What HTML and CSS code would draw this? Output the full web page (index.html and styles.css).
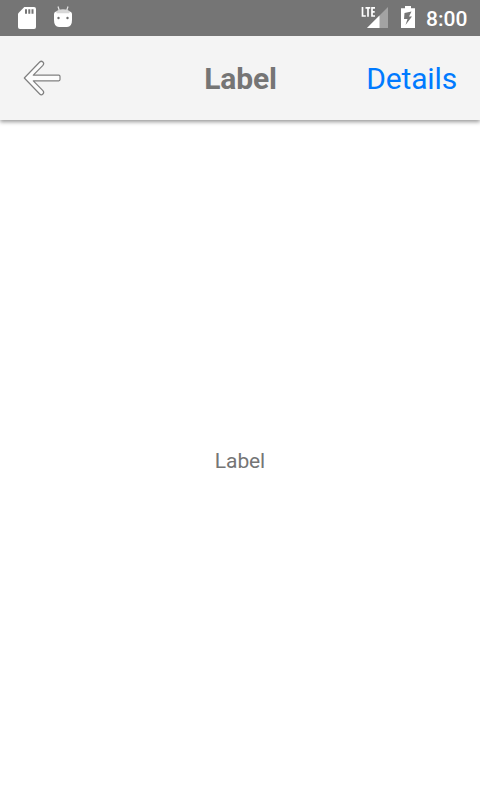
FILE: index.html
```html
<!DOCTYPE html>
<html lang="en">
<head>
<meta charset="utf-8">
<title>Label</title>
<link rel="stylesheet" href="styles.css">
</head>
<body>
<div class="status-bar">
  <svg class="sd" width="18" height="22" viewBox="0 0 18 22"><path fill="#fff" d="M6.300 0H16a2 2 0 0 1 2 2v18a2 2 0 0 1-2 2H2a2 2 0 0 1-2-2V6.500z"/><path fill="#757575" d="M7 2.200h2v4.500H7zM10.300 2.200h2v4.500h-2zM13.500 2.200h2v4.500h-2z"/></svg>
  <svg class="droid" width="18" height="22" viewBox="0 0 18 22"><path d="M4 .5l1.300 4M14 .5l-1.300 4" stroke="#e5e5e5" stroke-width="1.200"/><path fill="#fff" d="M0 8q0-2 2-2.500h14q2 .5 2 2.500v6q0 7-5 7H5q-5 0-5-7z"/><path fill="#d8d8d8" d="M2 6q1.500-2.700 7-2.700T16 6l-1 1.300H3z"/><circle cx="4.500" cy="12" r="1.200" fill="#707070"/><circle cx="13.500" cy="12" r="1.200" fill="#707070"/></svg>
  <div class="spacer"></div>
  <svg class="signal" width="28" height="24" viewBox="0 0 28 24"><path fill="#a3a3a3" d="M27 3v21H6z"/><path fill="#fff" d="M18.500 11.500V24H6z"/><path fill="#757575" d="M0 0h15.500v13.500H0z"/><path fill="none" stroke="#fff" stroke-width="1.700" d="M1.500 3v9H4.800M4.500 3.800h4.800M7 3.800v9M14 3.800h-3v8.200h3M11 7.800h2.700"/></svg>
  <svg class="battery" width="14" height="22" viewBox="0 0 14 22"><path fill="#fff" d="M4 0h6v2.300h4V22H0V2.300h4z"/><path fill="#757575" d="M10.500 5.500L3.500 7 3 13h3.500L4.500 19 11 10.500H8z"/></svg>
  <span class="clock">8:00</span>
</div>
<header class="nav-bar">
  <svg class="back" width="40" height="38" viewBox="0 0 40 38"><path fill="#fcfcfc" stroke="#808080" stroke-width="1.200" stroke-linejoin="round" d="M1.300 19L16.700 3q1.600-1.500 3.200 0t0 3.400L10.300 16.200H35.800q1.200 0 1.200 1.200v3.200q0 1.200-1.200 1.200H10.300L19.900 31.600q1.600 1.800 0 3.400t-3.200 0z"/></svg>
  <h1 class="title">Label</h1>
  <a class="details">Details</a>
</header>
<main class="content">Label</main>
</body>
</html>
```
FILE: styles.css
```css
* { box-sizing: border-box; }
body {
  margin: 0;
  height: 800px;
  display: flex;
  flex-direction: column;
  overflow: hidden;
  background: #fff;
  font-family: Roboto, sans-serif;
  color: #757575;
}
svg { display: block; flex: none; }
.status-bar {
  position: relative;
  z-index: 1;
  height: 36px;
  flex: none;
  display: flex;
  align-items: flex-start;
  padding: 0 12px 0 18px;
  background: #757575;
  color: #fff;
}
.sd { margin-top: 7px; }
.droid { margin: 6px 0 0 18px; }
.spacer { flex: 1; }
.signal { margin: 4px 12px 0 0; }
.battery { margin: 6px 11px 0 0; }
.clock {
  width: 42px;
  font-size: 21px;
  font-weight: 500;
  line-height: 38px;
}
.nav-bar {
  height: 84px;
  flex: none;
  display: grid;
  grid-template-columns: 1fr auto 1fr;
  align-items: center;
  padding: 0 23px;
  background: #f4f4f4;
  box-shadow: 0 2px 4px rgba(0, 0, 0, .4);
}
.title {
  margin: 0;
  padding: 2px 0 0 1px;
  font-size: 30px;
  font-weight: 700;
  line-height: 36px;
  letter-spacing: -.15px;
}
.details {
  justify-self: end;
  padding-top: 2px;
  font-size: 30px;
  line-height: 36px;
  letter-spacing: -.15px;
  color: #007aff;
}
.content {
  flex: 1;
  display: flex;
  align-items: center;
  justify-content: center;
  padding-top: 2px;
  font-size: 21px;
  letter-spacing: -.1px;
}
```
